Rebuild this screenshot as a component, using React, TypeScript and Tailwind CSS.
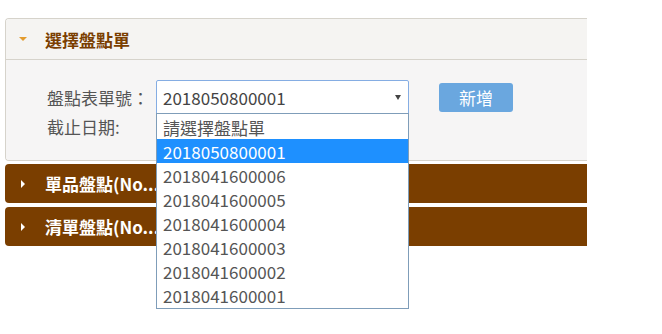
const options = [
  "請選擇盤點單",
  "2018050800001",
  "2018041600006",
  "2018041600005",
  "2018041600004",
  "2018041600003",
  "2018041600002",
  "2018041600001",
];

const selected = "2018050800001";

function BrownBar({ title, className = "" }: { title: string; className?: string }) {
  return (
    <div className={`h-[39px] bg-[#7a3e00] rounded-l-[4px] flex items-center ${className}`}>
      <span className="ml-[16px] w-0 h-0 border-y-[4px] border-y-transparent border-l-[4px] border-l-white" />
      <span className="ml-[20px] text-[17px] font-bold text-white leading-none whitespace-nowrap">{title}</span>
    </div>
  );
}

export default function App() {
  return (
    <div
      className="w-[662px] h-[334px] bg-white overflow-hidden pt-[18px] pl-[5px]"
      style={{ fontFamily: '"Noto Sans CJK TC", "Noto Sans", sans-serif' }}
    >
      <div className="relative w-[582px]">
        {/* 選擇盤點單 */}
        <div className="border-l border-t border-b border-[#d6d3cb] rounded-l-[4px] overflow-hidden">
          <div className="h-[41px] bg-[#f5f4f2] border-b border-[#d6d3cb] flex items-center">
            <span className="ml-[13px] w-0 h-0 border-x-[4px] border-x-transparent border-t-[4px] border-t-[#e39b2e]" />
            <span className="ml-[18px] text-[17px] font-bold text-[#7a3e00] leading-none">選擇盤點單</span>
          </div>
          <div className="h-[100px] bg-[#f6f5f5] pt-[20px]">
            <div className="flex items-center">
              <span className="ml-[41px] w-[109px] text-[17px] text-[#555] leading-none">盤點表單號：</span>
              <div className="w-[253px] h-[35px] bg-white border border-[#85ade3] rounded-[2px] flex items-center justify-between">
                <span className="ml-[6px] text-[17px] text-[#444] leading-none">{selected}</span>
                <span className="mr-[7px] w-0 h-0 border-x-[3px] border-x-transparent border-t-[5px] border-t-[#444]" />
              </div>
              <button className="ml-[30px] w-[74px] h-[29px] bg-[#6aa7df] rounded-[3px] text-white text-[17px] leading-none">
                新增
              </button>
            </div>
            <div className="ml-[41px] text-[17px] text-[#555] leading-[24px]">截止日期:</div>
          </div>
        </div>

        <BrownBar className="mt-[3px]" title="單品盤點(No......" />
        <BrownBar className="mt-[4px]" title="清單盤點(No......" />

        {/* 下拉選單 */}
        <div className="absolute left-[151px] top-[95px] w-[253px] bg-white border border-[#7f9db9] py-[1px]">
          {options.map((o) => (
            <div
              key={o}
              className={`h-[24px] pl-[6px] flex items-center text-[17px] leading-none ${
                o === selected ? "bg-[#1e90ff] text-white" : "text-[#555]"
              }`}
            >
              {o}
            </div>
          ))}
        </div>
      </div>
    </div>
  );
}
